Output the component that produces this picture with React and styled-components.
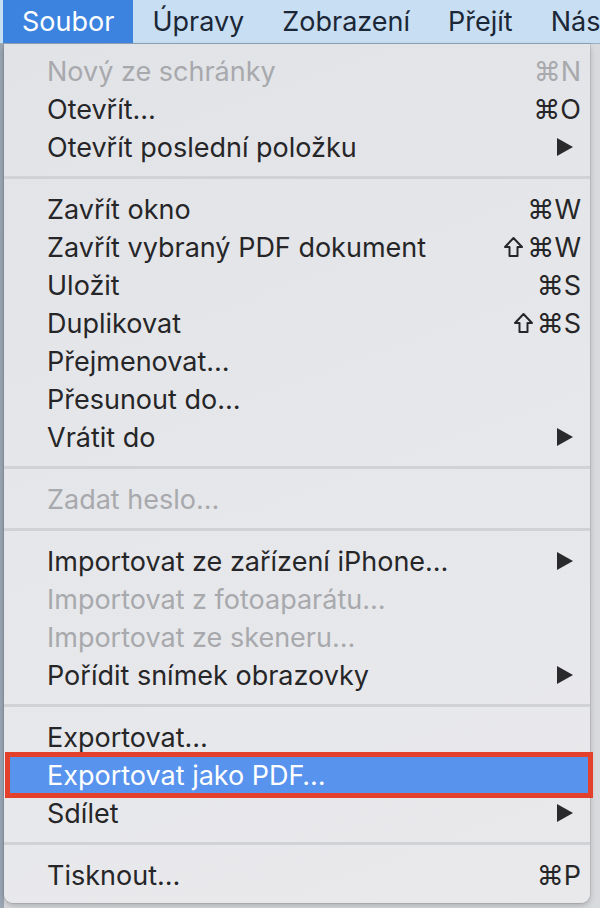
import * as React from 'react';
import styled, { createGlobalStyle } from 'styled-components';

const GlobalStyle = createGlobalStyle`
  html, body {
    margin: 0;
    padding: 0;
    background: #dcdde0;
  }
  body {
    font-family: Inter, "Noto Sans", "DejaVu Sans", sans-serif;
  }
`;

const Screen = styled.div`
  width: 600px;
  height: 908px;
  overflow: hidden;
  background: linear-gradient(to right, #9aa6b4 0px, #9aa6b4 4px, #d9dadd 4px);
`;

const MenuBar = styled.div`
  height: 43px;
  display: flex;
  align-items: stretch;
  padding-left: 3px;
  background: #c8def2;
  border-bottom: 1px solid #9db0c2;
`;

const BarItem = styled.div`
  display: flex;
  align-items: center;
  padding: 0 19px;
  font-size: 27px;
  color: ${(props) => (props.$active ? '#ffffff' : '#1b2736')};
  background: ${(props) => (props.$active ? '#3c83e0' : 'transparent')};
  white-space: nowrap;
`;

const Panel = styled.div`
  margin-left: 4px;
  width: 586px;
  padding: 8px 0 9px;
  background: linear-gradient(160deg, #e2e3e7 0%, #e6e7ea 50%, #e9e9ec 100%);
  border-radius: 0 0 9px 9px;
  box-shadow: 0 3px 6px rgba(0, 0, 0, 0.2), 0 0 0 1px rgba(0, 0, 0, 0.08);
`;

const Row = styled.div`
  height: 38px;
  display: flex;
  align-items: center;
  justify-content: space-between;
  padding: 0 9px 0 43px;
  font-size: 27px;
  color: ${(props) => (props.$disabled ? '#a8a9ad' : '#262628')};
  white-space: nowrap;
`;

const SelectedRow = styled(Row)`
  height: 36px;
  margin: 1px 2px 1px 6px;
  padding-left: 37px;
  color: #ffffff;
  background: #5893ee;
  outline: 5px solid #e3412b;
`;

const Shortcut = styled.span`
  display: flex;
  align-items: center;
  gap: 3px;
  font-family: Inter, "DejaVu Sans", sans-serif;
  font-size: 27px;
`;

const ShiftIcon = () => (
  <svg width="21" height="22" viewBox="0 0 21 22">
    <path
      d="M10.5 2 L19 11 L14.5 11 L14.5 20 L6.5 20 L6.5 11 L2 11 Z"
      fill="none"
      stroke="currentColor"
      strokeWidth="2"
      strokeLinejoin="round"
    />
  </svg>
);

const Arrow = styled.span`
  width: 0;
  height: 0;
  margin-right: 8px;
  border-top: 9px solid transparent;
  border-bottom: 9px solid transparent;
  border-left: 16px solid #2a2a2c;
`;

const Separator = styled.div`
  height: 3px;
  margin: 10px 0 11px;
  background: #d1d2d5;
`;

const groups = [
  [
    { label: 'Nový ze schránky', key: 'N', disabled: true },
    { label: 'Otevřít…', key: 'O' },
    { label: 'Otevřít poslední položku', sub: true },
  ],
  [
    { label: 'Zavřít okno', key: 'W' },
    { label: 'Zavřít vybraný PDF dokument', key: 'W', shift: true },
    { label: 'Uložit', key: 'S' },
    { label: 'Duplikovat', key: 'S', shift: true },
    { label: 'Přejmenovat…' },
    { label: 'Přesunout do…' },
    { label: 'Vrátit do', sub: true },
  ],
  [{ label: 'Zadat heslo…', disabled: true }],
  [
    { label: 'Importovat ze zařízení iPhone…', sub: true },
    { label: 'Importovat z fotoaparátu…', disabled: true },
    { label: 'Importovat ze skeneru…', disabled: true },
    { label: 'Pořídit snímek obrazovky', sub: true },
  ],
  [
    { label: 'Exportovat…' },
    { label: 'Exportovat jako PDF…', selected: true },
    { label: 'Sdílet', sub: true },
  ],
  [{ label: 'Tisknout…', key: 'P' }],
];

const MenuRow = ({ item }) => {
  const Comp = item.selected ? SelectedRow : Row;
  return (
    <Comp $disabled={item.disabled}>
      <span>{item.label}</span>
      {item.key && (
        <Shortcut>
          {item.shift && <ShiftIcon />}
          <span>⌘{item.key}</span>
        </Shortcut>
      )}
      {item.sub && <Arrow />}
    </Comp>
  );
};

const App = () => (
  <Screen>
    <GlobalStyle />
    <MenuBar>
      <BarItem $active>Soubor</BarItem>
      <BarItem>Úpravy</BarItem>
      <BarItem>Zobrazení</BarItem>
      <BarItem>Přejít</BarItem>
      <BarItem>Nástroje</BarItem>
    </MenuBar>
    <Panel>
      {groups.map((group, gi) => (
        <React.Fragment key={gi}>
          {gi > 0 && <Separator />}
          {group.map((item) => (
            <MenuRow key={item.label} item={item} />
          ))}
        </React.Fragment>
      ))}
    </Panel>
  </Screen>
);

export default App;
